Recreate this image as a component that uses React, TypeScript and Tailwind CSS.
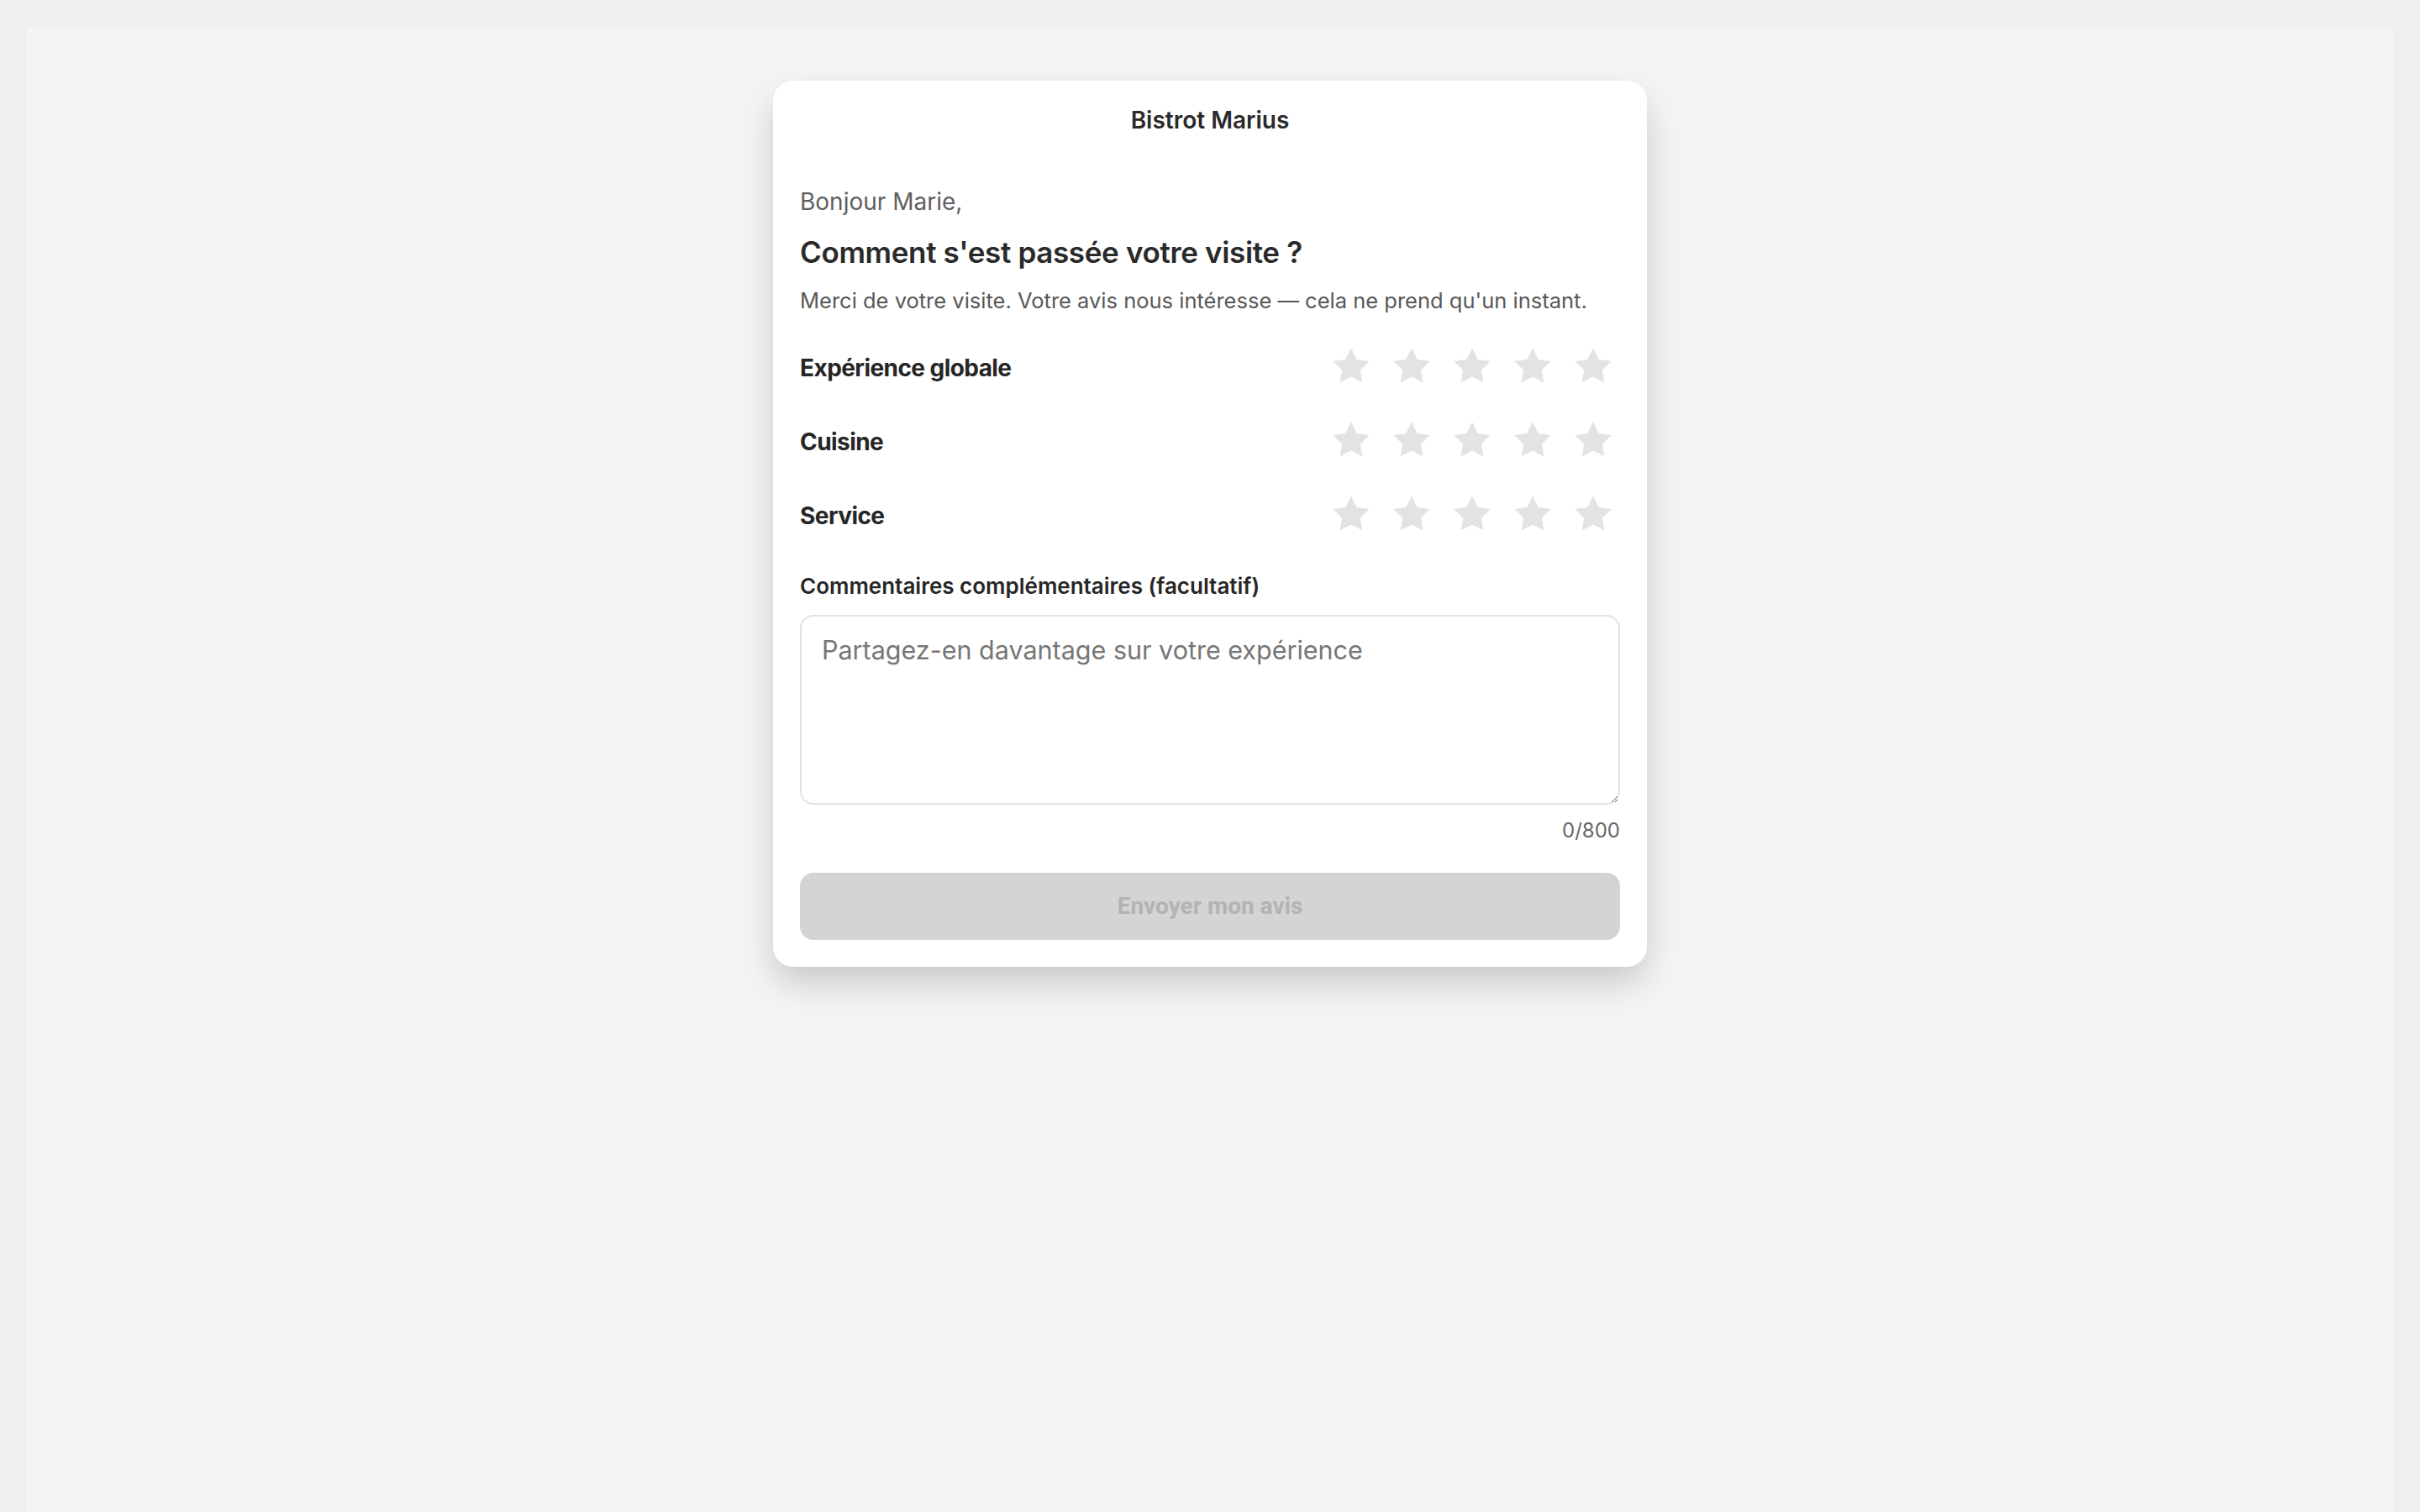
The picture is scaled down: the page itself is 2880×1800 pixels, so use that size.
import React from "react";

function Star() {
  return (
    <svg viewBox="0 0 24 24" className="w-[52px] h-[52px]" aria-hidden="true">
      <polygon
        points="12,2 15.09,8.26 22,9.27 17,14.14 18.18,21.02 12,17.77 5.82,21.02 7,14.14 2,9.27 8.91,8.26"
        fill="#e3e3e3"
      />
    </svg>
  );
}

function RatingRow({ label }: { label: string }) {
  return (
    <div className="flex items-center justify-between h-[72px]">
      <span className="pt-1 text-[28px] leading-[40px] font-bold tracking-[-0.02em] text-[#262626]">{label}</span>
      <div className="flex items-center gap-2">
        {[1, 2, 3, 4, 5].map((i) => (
          <button
            key={i}
            type="button"
            aria-label={`${i} étoile${i > 1 ? "s" : ""}`}
            className="w-16 h-16 flex items-center justify-center"
          >
            <Star />
          </button>
        ))}
      </div>
    </div>
  );
}

export default function App() {
  return (
    <div className="min-h-screen bg-[#efefef] px-8 pt-8 font-['Inter','Liberation_Sans',sans-serif]">
      <div className="bg-[#f4f4f4] min-h-screen pt-16 flex justify-center items-start">
        <div className="w-[1040px] bg-white rounded-3xl shadow-[0_20px_44px_-4px_rgba(0,0,0,0.2)] px-8 pb-8">
          <div className="pt-[27px] pb-[57px] text-center text-[28px] leading-[40px] font-semibold text-[#2a2a2a]">
            Bistrot Marius
          </div>
          <p className="text-[28px] leading-[40px] text-[#5f5f5f]">Bonjour Marie,</p>
          <h1 className="mt-[16px] text-[35px] leading-[48px] font-semibold text-[#2a2a2a] tracking-[-0.01em]">
            Comment s'est passée votre visite&nbsp;?
          </h1>
          <p className="mt-[16px] text-[25.5px] leading-[36px] text-[#585858]">
            Merci de votre visite. Votre avis nous intéresse — cela ne prend qu'un instant.
          </p>
          <div className="mt-[24px] flex flex-col gap-4">
            <RatingRow label="Expérience globale" />
            <RatingRow label="Cuisine" />
            <RatingRow label="Service" />
          </div>
          <label className="block mt-[32px] text-[26px] leading-[36px] font-semibold text-[#262626]">
            Commentaires complémentaires (facultatif)
          </label>
          <textarea
            className="mt-[16px] block w-full h-[226px] rounded-2xl border-2 border-[#e2e2e2] px-6 pt-[17px] pb-[14px] text-[30.5px] leading-[45px] text-[#333] placeholder:text-[#767676] font-['Inter',sans-serif] outline-none"
            placeholder="Partagez-en davantage sur votre expérience"
          />
          <div className="mt-[15px] text-right text-[24px] leading-[32px] text-[#666]">0/800</div>
          <button
            type="button"
            disabled
            className="mt-[34px] w-full h-20 rounded-2xl bg-[#d4d4d4] text-[#b3b3b3] text-[28px] font-bold font-['Roboto',sans-serif]"
          >
            Envoyer mon avis
          </button>
        </div>
      </div>
    </div>
  );
}
